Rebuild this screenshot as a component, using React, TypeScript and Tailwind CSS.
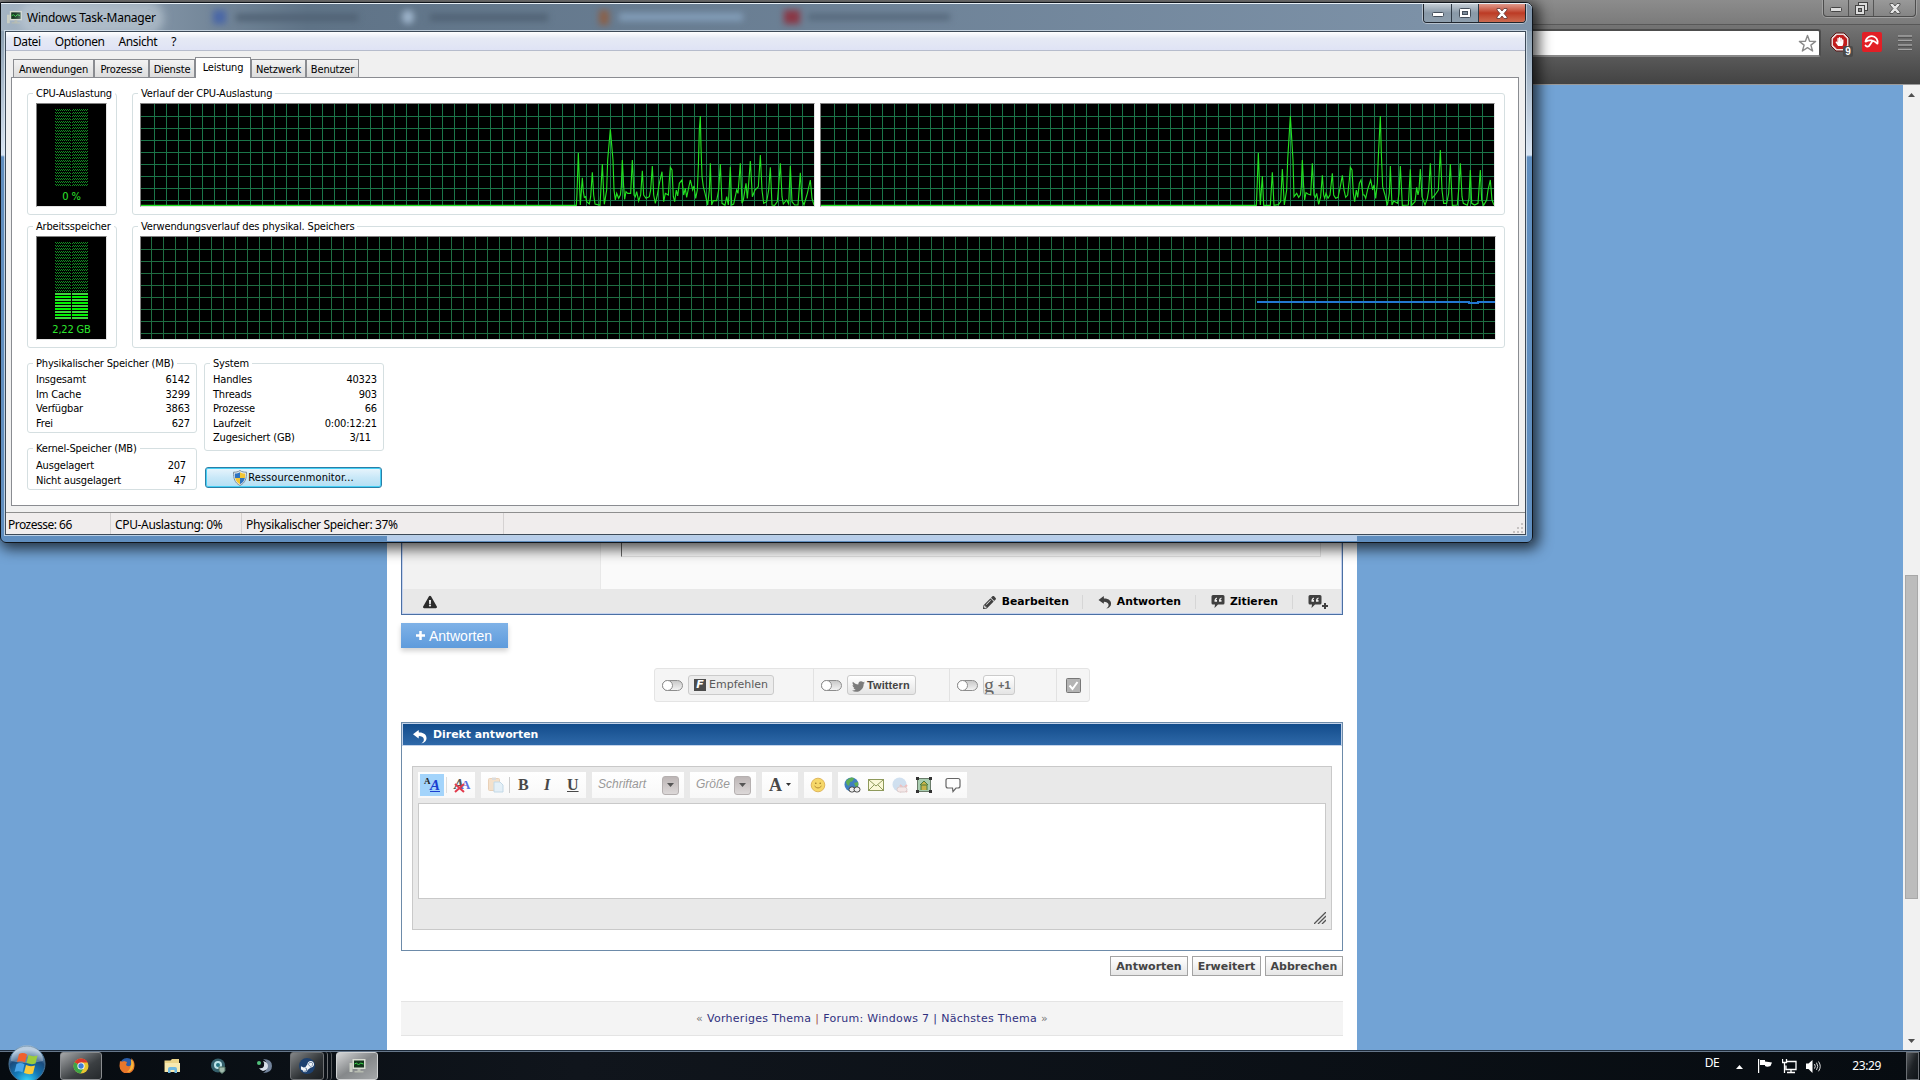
import type { ReactNode } from "react";
import {
	FaExclamationTriangle,
	FaHandPaper,
	FaPencilAlt,
	FaSteamSymbol,
	FaTwitter,
} from "react-icons/fa";

type GroupProps = {
	title: string;
	className: string;
	children: ReactNode;
};

type StatRow = [label: string, value: string];

const tabs = [
	{ label: "Anwendungen", width: "w-[81px]", active: false },
	{ label: "Prozesse", width: "w-[55px]", active: false },
	{ label: "Dienste", width: "w-[46px]", active: false },
	{ label: "Leistung", width: "w-[56px]", active: true },
	{ label: "Netzwerk", width: "w-[55px]", active: false },
	{ label: "Benutzer", width: "w-[53px]", active: false },
];

const physicalMemory: StatRow[] = [
	["Insgesamt", "6142"],
	["Im Cache", "3299"],
	["Verfügbar", "3863"],
	["Frei", "627"],
];

const kernelMemory: StatRow[] = [
	["Ausgelagert", "207"],
	["Nicht ausgelagert", "47"],
];

const systemStats: StatRow[] = [
	["Handles", "40323"],
	["Threads", "903"],
	["Prozesse", "66"],
	["Laufzeit", "0:00:12:21"],
	["Zugesichert (GB)", "3/11"],
];

// usage samples, three units per pixel
const cpuOne =
	"-1197,376 109,376 111,340 115,219 118,300 121,375 127,293 130,335 133,352 137,350 140,365 148,372 152,350 157,277 161,345 165,372 180,376 187,252 191,340 193,373 200,330 203,240 211,148 219,240 222,330 226,360 230,340 236,355 241,345 244,320 247,240 251,320 254,358 258,335 263,340 272,340 277,240 282,345 286,350 290,335 296,363 302,345 307,272 311,345 318,355 328,350 332,330 337,258 341,345 346,370 352,345 358,310 366,275 371,365 376,340 385,345 388,300 391,262 396,270 400,350 404,365 409,330 413,348 418,310 426,300 431,345 436,325 440,352 447,318 451,300 458,330 462,318 467,355 472,330 475,260 478,150 481,108 483,200 486,290 490,320 495,340 503,375 508,330 511,250 515,375 520,362 530,362 536,330 541,252 546,370 555,376 560,350 565,375 571,260 575,375 581,372 590,330 594,340 601,250 606,370 610,360 618,310 622,355 626,310 631,243 637,350 645,330 655,320 661,225 666,330 671,370 680,365 686,330 691,262 696,375 704,376 712,365 716,320 721,250 726,350 730,372 740,360 746,372 751,258 756,365 764,375 774,375 781,278 786,360 792,375 802,340 811,300 816,355 822,375";

const cpuTwo =
	"-1197,376 109,376 111,330 115,219 118,300 121,375 127,288 131,376 151,376 157,277 162,376 175,374 182,365 187,267 191,340 193,375 200,330 203,240 211,108 219,240 222,350 230,340 236,352 241,345 244,320 247,240 251,320 254,360 258,338 264,342 272,345 277,250 282,345 286,352 290,340 296,373 302,350 307,286 311,345 314,355 318,340 324,355 330,345 337,280 341,345 347,355 354,352 360,325 367,286 372,330 377,352 383,345 388,300 391,262 396,270 400,340 404,365 409,330 413,352 418,310 423,300 429,345 433,345 437,355 443,328 452,300 458,330 462,315 467,355 472,310 475,230 481,108 484,220 488,320 495,345 502,376 508,340 511,258 516,375 521,363 533,370 537,340 541,258 547,376 565,375 571,268 575,376 585,365 590,322 594,345 597,330 601,267 606,350 615,375 622,355 626,330 631,250 636,355 645,345 655,330 661,210 666,330 671,370 680,370 686,340 691,252 697,376 712,375 716,330 721,250 726,350 730,370 742,376 747,355 751,270 755,370 764,375 774,370 781,270 785,360 791,376 800,360 804,330 811,300 816,360 822,375";

function Group({ title, className, children }: GroupProps) {
	return (
		<section
			className={`relative rounded-[3px] border border-[#d5dfe1] ${className}`}
		>
			<h2 className="absolute -top-[7px] left-[5px] bg-white px-[3px] leading-[14px] whitespace-nowrap">
				{title}
			</h2>
			{children}
		</section>
	);
}

function Stats({ rows }: { rows: StatRow[] }) {
	return (
		<dl className="pt-[9px] pr-[6px] pl-[8px] leading-[14.6px]">
			{rows.map(([label, value]) => (
				<div key={label} className="flex justify-between whitespace-nowrap">
					<dt>{label}</dt>
					<dd className={label.startsWith("Zuge") ? "pr-[6px]" : ""}>{value}</dd>
				</div>
			))}
		</dl>
	);
}

function Meter({ label, bars }: { label: string; bars: number }) {
	return (
		<div className="flex h-[104px] w-[71px] flex-col items-center border-t border-l border-[#808080] border-r border-b border-r-[#e3e3e3] border-b-[#e3e3e3] bg-black pt-[5px] text-[#2ee62e]">
			<svg width="33" height="78" shapeRendering="crispEdges">
				<defs>
					<pattern id="dither" width="2" height="3" patternUnits="userSpaceOnUse">
						<rect width="1" height="1" fill="#118c22" />
						<rect x="1" y="1" width="1" height="1" fill="#118c22" />
					</pattern>
				</defs>
				<rect width="16" height="77" fill="url(#dither)" />
				<rect x="17" width="16" height="77" fill="url(#dither)" />
				{bars > 0 && (
					<rect y={78 - bars * 3} width="33" height={bars * 3} fill="#000" />
				)}
				{Array.from({ length: bars }, (_, i) => (
					<g key={i} fill={i % 2 ? "#00f500" : "#3cd83c"}>
						<rect y={75 - i * 3} width="16" height="2" />
						<rect x="17" y={75 - i * 3} width="16" height="2" />
					</g>
				))}
			</svg>
			<span className="mt-[3px] leading-[13px]">{label}</span>
		</div>
	);
}

function Grid({
	width,
	height,
	offset,
	color,
}: {
	width: number;
	height: number;
	offset: number;
	color: string;
}) {
	const columns = Math.ceil((width - offset) / 12);
	const rows = Math.floor(height / 12);
	return (
		<g fill={color}>
			{Array.from({ length: columns }, (_, i) => (
				<rect key={i} x={offset + i * 12} width="1" height={height} />
			))}
			{Array.from({ length: rows }, (_, i) => (
				<rect key={i} y={12 + i * 12} width={width} height="1" />
			))}
		</g>
	);
}

function CpuGraph({ points }: { points: string }) {
	return (
		<div className="border border-[#808080] border-r-[#e3e3e3] border-b-[#e3e3e3] bg-black">
			<svg width="673" height="102" className="block">
				<Grid width={673} height={102} offset={13} color="#1b7549" />
				<svg width="673" height="102" viewBox="-1197 72 2019 306">
					<polyline
						points={points}
						fill="none"
						stroke="#22e022"
						strokeWidth="3.4"
					/>
				</svg>
			</svg>
		</div>
	);
}

function MemoryGraph() {
	return (
		<div className="w-fit border border-[#808080] border-r-[#e3e3e3] border-b-[#e3e3e3] bg-black">
			<svg width="1354" height="102" className="block">
				<Grid width={1354} height={102} offset={10} color="#1f6d42" />
				<path
					d="M1116 65H1328V66H1337V65H1354"
					fill="none"
					stroke="#2377d2"
					strokeWidth="2"
				/>
			</svg>
		</div>
	);
}

function MonitorIcon({ className }: { className: string }) {
	return (
		<svg viewBox="0 0 16 16" className={className}>
			<path d="M0 5h3v9H0z" fill="#c9cec4" />
			<rect x="3" y="1" width="13" height="10" fill="#d8dcd2" />
			<rect x="4.5" y="2.5" width="10" height="7" fill="#12351b" />
			<path d="M5 6l2-1 2 2 2-2 3 1" stroke="#3ddc4c" fill="none" />
			<path d="M8 11h3v2h3v1.5H5V13h3z" fill="#b6bbb0" />
		</svg>
	);
}

function ShieldIcon() {
	return (
		<svg width="14" height="16" viewBox="0 0 14 16">
			<path
				d="M7 .5c2 1.500 4 1.700 6.500 1.700 0 6-1 10.500-6.500 13.300C1.500 12.700.5 8.200.5 2.200 3 2.200 5 2 7 .5z"
				fill="#e8eef2"
				stroke="#7b8f9d"
			/>
			<path d="M7 2.200V8H2.100C1.800 6.500 1.800 5 1.800 3.500 4 3.500 5.500 3 7 2.200z" fill="#2f74c0" />
			<path d="M7 2.200V8h4.900c.3-1.500.3-3 .3-4.500C10 3.500 8.500 3 7 2.200z" fill="#f3c634" />
			<path d="M7 8v6.200C4 12.700 2.700 10.500 2.100 8z" fill="#f3c634" />
			<path d="M7 8v6.200c3-1.500 4.300-3.700 4.900-6.200z" fill="#2f74c0" />
		</svg>
	);
}

function WindowButtons() {
	return (
		<div className="flex h-[19px] w-[103px] overflow-hidden rounded-b-[4px] border border-t-0 border-[#20262e] shadow-[0_0_0_1px_#ffffff70]">
			<span className="flex w-[28px] items-center justify-center border-r border-[#2f3a46] bg-linear-to-b from-[#c3ccd4] via-[#8999a8] via-50% to-[#8e9fae]">
				<svg width="12" height="6" className="mt-[3px]">
					<rect x=".5" y=".5" width="11" height="4" rx="1" fill="#fff" stroke="#454f5b" />
				</svg>
			</span>
			<span className="flex w-[27px] items-center justify-center border-r border-[#2f3a46] bg-linear-to-b from-[#c3ccd4] via-[#8999a8] via-50% to-[#8e9fae]">
				<svg width="12" height="10">
					<rect x=".5" y=".5" width="11" height="9" rx="1" fill="#fff" stroke="#454f5b" />
					<rect x="3.5" y="3.5" width="5" height="3" fill="#7c8b99" stroke="#454f5b" />
				</svg>
			</span>
			<span className="flex flex-1 items-center justify-center bg-linear-to-b from-[#e0998b] via-[#bc3a24] via-50% to-[#cc6a50]">
				<svg width="12" height="11">
					<path
						d="M1 .5h3L6 3l2-2.500h3v1.500L8 5.500l3 3.500v1.500H8L6 8l-2 2.500H1V9l3-3.500L1 2z"
						fill="#fff"
						stroke="#5b3334"
						strokeWidth=".8"
					/>
				</svg>
			</span>
		</div>
	);
}

function TaskManager() {
	return (
		<main className="absolute top-[2px] left-0 flex h-[541px] w-[1533px] flex-col rounded-tr-[7px] rounded-b-[6px] border border-[#10151b] bg-linear-to-b from-[#8ea1b3] from-[30px] via-[#d9e5f3] via-[152px] to-[#608ebf] to-[154px] pr-[6px] pl-[4px] font-['DejaVu_Sans_Condensed','DejaVu_Sans',sans-serif] text-[11px] tracking-[-0.17px] text-black shadow-[3px_3px_14px_3px_#000000b0]">
			<header className="-mr-[6px] -ml-[4px] flex h-[28px] shrink-0 justify-between overflow-hidden rounded-tr-[6px] border-t border-[#e6eef5] bg-linear-to-r from-[#a4b4c3] via-[#5f7387] via-20% to-[#7f94aa]">
				<div className="flex h-[26px] items-center">
					<MonitorIcon className="ml-[6px] h-[15px] w-[15px]" />
					<h1 className="mt-px ml-[5px] rounded-full bg-[#c3ced899] font-['Noto_Sans',sans-serif] text-[12px] tracking-[-0.25px] shadow-[0_0_8px_8px_#c3ced899]">
						Windows Task-Manager
					</h1>
					<div className="ml-[57px] flex items-center blur-[3px]">
						<i className="h-[14px] w-[13px] bg-[#4a67a6]" />
						<i className="ml-[10px] h-[7px] w-[122px] bg-[#506274]" />
						<i className="ml-[44px] h-[14px] w-[12px] rounded-full bg-[#9db3ca]" />
						<i className="ml-[16px] h-[7px] w-[118px] bg-[#506274]" />
						<i className="ml-[51px] h-[15px] w-[10px] bg-[#8a6049]" />
						<i className="ml-[10px] h-[8px] w-[124px] bg-[#829db8]" />
						<i className="ml-[41px] h-[14px] w-[16px] bg-[#8a3745]" />
						<i className="ml-[8px] h-[6px] w-[142px] bg-[#55677a]" />
					</div>
				</div>
				<div className="mr-[6px]">
					<WindowButtons />
				</div>
			</header>
			<div className="flex h-[504px] flex-col border border-[#3d4a58] bg-[#f0f0f0] shadow-[0_0_0_1px_#e4edf6b0]">
				<nav className="flex h-[19px] shrink-0 items-center gap-[14px] border-b border-[#b6bccc] bg-linear-to-b from-white via-[#e6eaf5] via-35% to-[#dfe3f5] pt-[2px] pl-[7px] font-['Noto_Sans',sans-serif] text-[12px] tracking-[-0.4px]">
					<span>Datei</span>
					<span>Optionen</span>
					<span>Ansicht</span>
					<span>?</span>
				</nav>
				<ul className="z-10 mt-[6px] flex h-[20px] shrink-0 items-end pl-[7px]">
					{tabs.map((tab) => (
						<li
							key={tab.label}
							className={`flex shrink-0 justify-center border border-b-0 border-[#8a8c91] ${tab.width} ${
								tab.active
									? "-mb-px h-[21px] bg-white pt-[2px]"
									: "h-[18px] bg-linear-to-b from-[#f3f3f3] to-[#dddddd] pt-[2px]"
							}`}
						>
							{tab.label}
						</li>
					))}
				</ul>
				<div className="mx-[5px] h-[429px] w-[1508px] shrink-0 border border-[#8a8c91] bg-white pt-[15px] pl-[15px]">
					<div className="flex gap-[15px]">
						<Group title="CPU-Auslastung" className="h-[122px] w-[90px] pt-[9px] pl-[8px]">
							<Meter label="0 %" bars={0} />
						</Group>
						<Group
							title="Verlauf der CPU-Auslastung"
							className="flex h-[122px] w-[1373px] items-start gap-[5px] pt-[9px] pl-[7px]"
						>
							<CpuGraph points={cpuOne} />
							<CpuGraph points={cpuTwo} />
						</Group>
					</div>
					<div className="mt-[11px] flex gap-[15px]">
						<Group title="Arbeitsspeicher" className="h-[122px] w-[90px] pt-[9px] pl-[8px]">
							<Meter label="2,22 GB" bars={9} />
						</Group>
						<Group
							title="Verwendungsverlauf des physikal. Speichers"
							className="h-[122px] w-[1373px] pt-[9px] pl-[7px]"
						>
							<MemoryGraph />
						</Group>
					</div>
					<div className="mt-[15px] flex gap-[7px]">
						<div className="flex flex-col gap-[15px]">
							<Group title="Physikalischer Speicher (MB)" className="h-[70px] w-[170px]">
								<Stats rows={physicalMemory} />
							</Group>
							<Group title="Kernel-Speicher (MB)" className="h-[42px] w-[170px]">
								<div className="pt-px pr-[4px]">
									<Stats rows={kernelMemory} />
								</div>
							</Group>
						</div>
						<div>
							<Group title="System" className="h-[88px] w-[180px]">
								<Stats rows={systemStats} />
							</Group>
							<button className="mt-[16px] ml-px flex h-[21px] w-[177px] items-center justify-center rounded-[3px] border border-[#2b7ea6] bg-linear-to-b from-[#e9f5fc] via-[#c9e8f8] via-50% to-[#b3dff4] tracking-[0.08px] shadow-[inset_0_0_0_1px_#45d0f6]">
								<ShieldIcon />
								<span className="mt-px ml-px">Ressourcenmonitor...</span>
							</button>
						</div>
					</div>
				</div>
				<footer className="mt-[6px] flex flex-1 items-center border-t border-[#8e8e8e] bg-[#f0eded] font-['Noto_Sans',sans-serif] text-[12px] tracking-[-0.35px]">
					<span className="flex h-full w-[105px] items-center border-r border-[#d5d2d2] pt-[2px] pl-[2px] tracking-[-0.5px]">
						Prozesse: 66
					</span>
					<span className="flex h-full w-[131px] items-center border-r border-[#d5d2d2] pt-[2px] pl-[4px]">
						CPU-Auslastung: 0%
					</span>
					<span className="flex h-full w-[262px] items-center border-r border-[#d5d2d2] pt-[2px] pl-[4px]">
						Physikalischer Speicher: 37%
					</span>
					<svg width="12" height="12" className="mt-auto ml-auto" fill="#c6c2c2">
						<path d="M8 1h2v2H8zM8 5h2v2H8zM8 9h2v2H8zM4 5h2v2H4zM4 9h2v2H4zM0 9h2v2H0z" />
					</svg>
				</footer>
			</div>
			<div className="mt-px ml-[382px] h-[5px] w-[970px] bg-[#b7cde9]" />
		</main>
	);
}

function BrowserChrome() {
	return (
		<header className="h-[85px] border-b border-[#9a9a9a]">
			<div className="flex h-[25px] justify-end border-b border-[#585858] bg-linear-to-b from-[#8c8c8c] to-[#7b7b7b] pr-[4px]">
				<div className="flex h-[17px] w-[93px] rounded-b-[4px] border border-t-0 border-[#4c4c4c] bg-linear-to-b from-[#999] to-[#858585] shadow-[0_0_0_1px_#a2a2a2]">
					<span className="flex w-[25px] items-center justify-center border-r border-[#555]">
						<svg width="12" height="6" className="mt-1">
							<rect x=".5" y=".5" width="11" height="4" rx="1" fill="#ddd" stroke="#444" />
						</svg>
					</span>
					<span className="flex w-[25px] items-center justify-center border-r border-[#555]">
						<svg width="13" height="13" fill="#ddd" stroke="#444">
							<rect x="3.5" y=".5" width="9" height="8" />
							<rect x=".5" y="3.5" width="9" height="9" />
							<rect x="3.5" y="6.5" width="3" height="3" fill="#888" />
						</svg>
					</span>
					<span className="flex flex-1 items-center justify-center">
						<svg width="12" height="11">
							<path
								d="M1 .5h3L6 3l2-2.500h3v1.500L8 5.500l3 3.500v1.500H8L6 8l-2 2.500H1V9l3-3.500L1 2z"
								fill="#e4e4e4"
								stroke="#444"
								strokeWidth=".8"
							/>
						</svg>
					</span>
				</div>
			</div>
			<div className="flex h-[59px] items-start justify-end bg-linear-to-b from-[#747474] to-[#434343] pt-[4px]">
				<div className="flex h-[28px] w-[1000px] items-center justify-end rounded-[3px] border-2 border-[#4d4d4d] border-b-[#8a8a8a] bg-white pr-[2px]">
					<svg width="19" height="19" viewBox="0 0 19 19">
						<path
							d="M9.500 1.500l2.100 5.700 6 .2-4.700 3.700 1.700 5.900-5.100-3.400L4.400 17l1.700-5.900L1.400 7.400l6-.2z"
							fill="#fff"
							stroke="#8a8a8a"
							strokeWidth="1.4"
							strokeLinejoin="round"
						/>
					</svg>
				</div>
				<div className="relative mt-[3px] ml-[9px] h-[24px] w-[24px]">
					<svg width="20" height="20" viewBox="0 0 20 20">
						<path d="M6 1h8l5 5v8l-5 5H6l-5-5V6z" fill="#e8dada" stroke="#5d1414" />
						<path d="M6.800 3h6.400L17 6.800v6.400L13.200 17H6.800L3 13.200V6.800z" fill="#c11d1d" />
						<FaHandPaper x="5" y="5" size="9" fill="#fff" />
					</svg>
					<span className="absolute top-[14px] left-[13px] h-[11px] w-[10px] rounded-[2px] bg-[#4a4a4a] text-center font-['Liberation_Sans',sans-serif] text-[10px] leading-[11px] font-bold text-white">
						9
					</span>
				</div>
				<svg width="20" height="20" viewBox="0 0 20 20" className="mt-[3px] ml-[8px]">
					<rect width="20" height="20" rx="2" fill="#e21f26" />
					<path
						d="M3.500 9.500C5 4 11 2.500 14.500 6.500c1 1.500 1.300 3 1 5M4 9.500c3-2 8-1.500 11 2M10.500 9L7 14q-2 1.500-3.500-.5"
						fill="none"
						stroke="#fff"
						strokeWidth="1.800"
						strokeLinecap="round"
					/>
				</svg>
				<svg width="14" height="16" className="mt-[6px] mr-[8px] ml-[16px]">
					<path d="M0 2h14M0 6.500h14M0 11h14M0 15.500h14" stroke="#3e3e3e" />
					<path d="M0 1h14M0 5.500h14M0 10h14M0 14.500h14" stroke="#a4a4a4" strokeWidth="1.500" />
				</svg>
			</div>
		</header>
	);
}

function ReplyArrow({ className, fill }: { className: string; fill: string }) {
	return (
		<svg viewBox="0 0 15 15" className={className} fill={fill}>
			<path d="M0 4.500L6 0l.3 2.800C11 2.500 14.500 5 14.500 8.800c0 2.700-2 5-5.500 5.700 2.300-1.500 3-3.200 2.500-5C11 7.500 9 6.500 6.300 6.500L6 9z" />
		</svg>
	);
}

function QuoteIcon() {
	return (
		<svg width="14" height="14" viewBox="0 0 14 14">
			<path d="M2 0h10q1.500 0 1.500 1.500V8q0 1.500-1.500 1.500H7L3.500 13 4 9.500H2Q.5 9.500.5 8V1.500Q.5 0 2 0z" fill="#404040" />
			<path
				d="M6 2.500Q3.500 3 3.500 5v1.800H6V5H5q0-1 1-1.300zM10.500 2.500Q8 3 8 5v1.800h2.500V5h-1q0-1 1-1.300z"
				fill="#eee"
			/>
		</svg>
	);
}

function Post() {
	return (
		<article className="flex h-[91px] flex-col border border-t-0 border-[#4b70a4] p-px pt-0 shadow-[inset_-1px_-1px_0_#c6d3ee,inset_1px_0_0_#c6d3ee]">
			<div className="flex h-[65px]">
				<div className="w-[198px] border-r border-[#e8e8e8] bg-[#f2f2f2]" />
				<div className="flex-1 bg-[#fafafa] pr-[20px] pl-[20px]">
					<div className="h-[33px] border-r border-b border-l border-[#e2e2e2] border-l-[#666]" />
				</div>
			</div>
			<footer className="flex h-[24px] items-center bg-[#e8e8e8] text-[10.8px] font-bold text-black">
				<FaExclamationTriangle size="14" className="mt-px ml-[20px] text-[#2c2c2c]" />
				<div className="mt-[2px] ml-auto flex h-[14px] items-center border-r border-[#d6d6d6] pr-[13px]">
					<FaPencilAlt size="13" className="mr-[6px] text-[#404040]" />
					Bearbeiten
				</div>
				<div className="mt-[2px] flex h-[14px] items-center border-r border-[#d6d6d6] pr-[14px] pl-[15px]">
					<ReplyArrow className="mr-[5px] h-[13px] w-[14px]" fill="#404040" />
					Antworten
				</div>
				<div className="mt-[2px] flex h-[14px] items-center border-r border-[#d6d6d6] pr-[14px] pl-[15px]">
					<span className="mr-[5px]">
						<QuoteIcon />
					</span>
					Zitieren
				</div>
				<div className="mt-px flex items-center pr-[13px] pl-[15px]">
					<QuoteIcon />
					<svg width="6" height="6" className="mt-[9px]">
						<path d="M0 3h6M3 0v6" stroke="#404040" strokeWidth="2" />
					</svg>
				</div>
			</footer>
		</article>
	);
}

function Toggle() {
	return (
		<span className="flex h-[11px] w-[21px] shrink-0 rounded-full border border-[#8d8d8d] bg-linear-to-b from-[#c9c9c9] to-[#f4f4f4]">
			<span className="-mt-px -ml-px h-[11px] w-[11px] rounded-full border border-[#8d8d8d] bg-white" />
		</span>
	);
}

function ShareBar() {
	return (
		<div className="ml-[253px] flex h-[34px] w-[436px] rounded-[3px] border border-[#e4e4e4] bg-[#f5f5f5] text-[#666]">
			<div className="flex w-[159px] items-center border-r border-[#e2e2e2] pl-[7px]">
				<Toggle />
				<span className="ml-[5px] flex h-[20px] w-[86px] items-center rounded-[3px] border border-[#cbcbcb] bg-[#ececec] pl-[5px] text-[11px] text-[#5a5a5a]">
					<span className="mr-[3px] h-[12px] w-[12px] bg-[#4c4c4c] text-center text-[11px] leading-[12px] font-bold text-white italic">
						F
					</span>
					Empfehlen
				</span>
			</div>
			<div className="flex w-[136px] items-center border-r border-[#e2e2e2] pl-[7px]">
				<Toggle />
				<span className="ml-[5px] flex h-[20px] w-[69px] items-center rounded-[3px] border border-[#cbcbcb] bg-linear-to-b from-white to-[#e4e4e4] pl-[4px] font-['Liberation_Sans',sans-serif] text-[11px] font-bold tracking-[0.1px] text-[#444]">
					<FaTwitter size="13" className="mt-[2px] mr-[2px] text-[#7b7b7b]" />
					Twittern
				</span>
			</div>
			<div className="flex w-[107px] items-center border-r border-[#e2e2e2] pl-[7px]">
				<Toggle />
				<span className="ml-[5px] flex h-[20px] w-[32px] items-center overflow-hidden rounded-[3px] border border-[#cbcbcb] bg-linear-to-b from-white to-[#e4e4e4] font-['Liberation_Sans',sans-serif] text-[11px] font-bold text-[#666]">
					<span className="mr-[5px] w-[9px] font-['Liberation_Serif',serif] text-[20px] leading-[18px] font-normal">
						g
					</span>
					+1
				</span>
			</div>
			<div className="flex flex-1 items-center justify-center">
				<svg width="15" height="15">
					<rect x=".5" y=".5" width="14" height="14" rx="1" fill="#b4b4b4" stroke="#777" />
					<path d="M3.500 7.500l3 3.500 5-7" fill="none" stroke="#fff" strokeWidth="2" />
				</svg>
			</div>
		</div>
	);
}

const toolGroup =
	"flex h-[26px] shrink-0 items-center bg-linear-to-b from-white to-[#f8f8f8]";

function DropdownArrow() {
	return (
		<span className="flex h-[19px] w-[17px] items-center justify-center rounded-[3px] border border-[#b5b0b0] bg-linear-to-b from-[#bdb6b6] to-[#dcd8d8]">
			<svg width="7" height="4">
				<path d="M0 0h7L3.500 4z" fill="#555" />
			</svg>
		</span>
	);
}

function Toolbar() {
	return (
		<div className="flex gap-[6px] font-['Liberation_Sans',sans-serif] text-[12px] text-[#999]">
			<div className={`${toolGroup} w-[57px] pl-[2px]`}>
				<span className="relative flex h-[22px] w-[24px] items-center justify-end bg-[#a3d4fb] pr-[4px] font-['Liberation_Serif',serif] font-bold">
					<b className="absolute top-[3px] left-[4px] text-[9px] leading-[9px] text-[#222]">A</b>
					<b className="text-[15px] leading-[14px] text-[#1b3fd0] italic underline">A</b>
				</span>
				<i className="ml-[2px] h-[16px] w-px bg-[#ddd]" />
				<span className="relative ml-[7px] flex font-['Liberation_Serif',serif] font-bold">
					<b className="text-[15px] leading-[16px] text-[#555] italic">A</b>
					<b className="-ml-[3px] text-[13px] leading-[18px] text-[#5b6fe0]">A</b>
					<svg width="11" height="10" className="absolute top-[7px] left-0">
						<path d="M1 1l9 8M10 1L1 9" stroke="#e23a4c" strokeWidth="2" />
					</svg>
				</span>
			</div>
			<div className={`${toolGroup} w-[105px] pl-[7px] font-['Liberation_Serif',serif] text-[16px] font-bold text-[#484848]`}>
				<svg width="16" height="16" opacity=".5">
					<rect x=".5" y="1.5" width="11" height="12" rx="1" fill="#edc79c" stroke="#d8a877" />
					<rect x="4" y=".5" width="4" height="2.5" fill="#bbb" />
					<path d="M6 5h6l3 3v7H6z" fill="#cfe6f5" stroke="#8bb8d4" />
				</svg>
				<i className="ml-[5px] h-[16px] w-px bg-[#ccc]" />
				<span className="ml-[8px] w-[11px]">B</span>
				<span className="ml-[15px] w-[8px] italic">I</span>
				<span className="ml-[15px] underline">U</span>
			</div>
			<div className={`${toolGroup} w-[92px] justify-between pr-[5px] pl-[6px] italic`}>
				<span className="-mt-[2px]">Schriftart</span>
				<DropdownArrow />
			</div>
			<div className={`${toolGroup} w-[66px] justify-between pr-[5px] pl-[6px] italic`}>
				<span className="-mt-[2px]">Größe</span>
				<DropdownArrow />
			</div>
			<div className={`${toolGroup} w-[36px] pl-[7px]`}>
				<b className="font-['Liberation_Serif',serif] text-[18px] text-[#484848]">A</b>
				<svg width="5" height="4" className="ml-[4px]">
					<path d="M0 0h5L2.500 3z" fill="#333" />
				</svg>
			</div>
			<div className={`${toolGroup} w-[28px] justify-center`}>
				<svg width="16" height="16">
					<circle cx="8" cy="8" r="6.800" fill="#f6d869" stroke="#e0b65c" />
					<circle cx="5.800" cy="6.300" r=".8" fill="#9a7426" />
					<circle cx="10.200" cy="6.300" r=".8" fill="#9a7426" />
					<path d="M4.500 9q3.500 4 7 0" stroke="#b58b35" fill="none" />
				</svg>
			</div>
			<div className={`${toolGroup} w-[129px] pl-[6px]`}>
				<svg width="17" height="17">
					<circle cx="7.500" cy="7.500" r="7" fill="#3f7fc0" />
					<path d="M2 4q4-5 8-3-1 4-4 4l-1 4q-3-1-3-5zM10 6l4-1q1 4-2 6z" fill="#5fae55" />
					<rect x="5" y="10" width="6" height="5" rx="2.5" fill="#eee" stroke="#444" />
					<rect x="10" y="10" width="6" height="5" rx="2.5" fill="#eee" stroke="#444" />
				</svg>
				<svg width="16" height="12" className="ml-[7px]">
					<rect x=".5" y=".5" width="15" height="11" fill="#fbf8d8" stroke="#8f9a5c" />
					<path d="M1 1l7 6 7-6M1 11l5-5M15 11l-5-5" fill="none" stroke="#8f9a5c" />
				</svg>
				<svg width="16" height="16" className="ml-[8px]" opacity=".4">
					<circle cx="7.500" cy="7.500" r="7" fill="#8fb7de" />
					<path d="M8 8l7 7M15 8l-7 7" stroke="#d66" strokeWidth="2" />
					<rect x="5" y="10" width="10" height="5" rx="2.5" fill="#ecc" stroke="#a88" />
				</svg>
				<svg width="16" height="16" className="ml-[8px]">
					<rect x="1.5" y="1.5" width="13" height="13" fill="#a9cdb0" stroke="#6a7c6a" />
					<path d="M5 13V8h6v5M4 8l4-4 4 4" fill="#c7b34a" stroke="#4c7c3c" />
					<path d="M0 0h3v3H0zM13 0h3v3h-3zM0 13h3v3H0zM13 13h3v3h-3z" fill="#333" />
				</svg>
				<svg width="16" height="16" className="ml-[13px]">
					<path
						d="M3 1.500h10q2 0 2 2V9q0 2-2 2h-2l-3 3.500L7.500 11H3q-2 0-2-2V3.500q0-2 2-2z"
						fill="#fdfdfd"
						stroke="#666"
						strokeWidth="1.2"
					/>
				</svg>
			</div>
		</div>
	);
}

function QuickReply() {
	return (
		<section className="h-[229px] border border-[#6d8ba9]">
			<h2 className="flex h-[23px] items-center border border-[#c3d3ea] bg-linear-to-b from-[#124c8b] to-[#2e69a9] pt-[2px] pl-[10px] text-[10.9px] font-bold text-white">
				<ReplyArrow className="mt-[2px] mr-[6px] h-[14px] w-[14px]" fill="#fff" />
				Direkt antworten
			</h2>
			<div className="mx-[10px] mt-[20px] h-[164px] border border-[#c9c9c9] bg-[#e9e9e9] px-[5px] pt-[5px]">
				<Toolbar />
				<div className="mt-[5px] h-[96px] border border-[#c9c9c9] bg-white" />
				<svg width="12" height="12" className="mt-[13px] ml-auto block">
					<path d="M0 12L12 0M4 12L12 4M8 12L12 8" stroke="#555" strokeWidth="1.3" />
				</svg>
			</div>
		</section>
	);
}

const formButton =
	"h-[20px] border border-[#a3a3a3] bg-linear-to-b from-white to-[#e6e6e6] text-center leading-[20px]";

function ForumPage() {
	return (
		<div className="ml-[387px] w-[970px] bg-white px-[14px] pt-[439px] font-['DejaVu_Sans',sans-serif]">
			<Post />
			<div className="mt-[8px] flex h-[25px] w-[107px] items-center bg-linear-to-b from-[#7fb2e7] to-[#5e9bdc] pt-px pl-[15px] font-['Liberation_Sans',sans-serif] text-[14px] text-white shadow-[0_3px_5px_#0000002e]">
				<svg width="9" height="9" className="mr-[4px] -mt-[2px]">
					<path d="M0 4.500h9M4.500 0v9" stroke="#fff" strokeWidth="2.5" />
				</svg>
				Antworten
			</div>
			<div className="h-[20px]" />
			<ShareBar />
			<div className="h-[20px]" />
			<QuickReply />
			<div className="mt-[5px] flex justify-end gap-[4px] text-[11px] font-bold text-[#444]">
				<span className={`${formButton} w-[78px]`}>Antworten</span>
				<span className={`${formButton} w-[69px]`}>Erweitert</span>
				<span className={`${formButton} w-[78px]`}>Abbrechen</span>
			</div>
			<nav className="mt-[25px] flex h-[35px] items-center justify-center gap-[4px] border-y border-[#e4e4e4] bg-[#f4f4f4] pt-[2px] text-[11px] tracking-[0.27px] text-[#30307e]">
				<span className="text-[#777]">«</span>
				<span>Vorheriges Thema</span>
				<span className="text-[#a0524c]">|</span>
				<span>Forum: Windows 7</span>
				<span>|</span>
				<span>Nächstes Thema</span>
				<span className="text-[#777]">»</span>
			</nav>
		</div>
	);
}

function Scrollbar() {
	return (
		<div className="flex w-[17px] flex-col items-center bg-[#f1f1f1] pt-[8px] pb-[7px]">
			<svg width="7" height="4">
				<path d="M0 4h7L3.500 0z" fill="#505050" />
			</svg>
			<div className="mt-[478px] h-[324px] w-[13px] border border-[#a8a8a8] bg-[#bcbcbc]" />
			<svg width="7" height="4" className="mt-auto">
				<path d="M0 0h7L3.500 4z" fill="#505050" />
			</svg>
		</div>
	);
}

function StartOrb() {
	return (
		<svg width="38" height="38" viewBox="0 0 38 38" className="-mt-[6px] ml-[8px] shrink-0">
			<defs>
				<radialGradient id="orb" cx=".5" cy="1" r=".9">
					<stop offset="0" stopColor="#38dcff" />
					<stop offset=".4" stopColor="#1479b8" />
					<stop offset=".75" stopColor="#1b4b7c" />
					<stop offset="1" stopColor="#9cb9d4" />
				</radialGradient>
			</defs>
			<circle cx="19" cy="19" r="18" fill="url(#orb)" stroke="#4b7597" />
			<path d="M3 16a16 16 0 0 1 32 0q-16 4-32 0z" fill="#fff" opacity=".3" />
			<path d="M11 9q4-2 8 .5l-2 8q-4-2-8-.5z" fill="#f0602c" />
			<path d="M20.500 10q4 2 9 .5l-2 8q-4 1.500-9-.5z" fill="#9ccc3d" />
			<path d="M8.500 19q4-2 8 .3l-2 8q-4-2-8-.3z" fill="#4aa5e8" />
			<path d="M18 20q4 2 9 .5l-2 8q-4 1.500-9-.5z" fill="#fbcb3a" />
		</svg>
	);
}

function Taskbar() {
	return (
		<footer className="absolute bottom-0 left-0 flex h-[30px] w-full border-t border-[#1c2a3a] bg-linear-to-r from-[#060b10] via-[#10151c] via-30% to-[#070c11] text-white shadow-[inset_0_1px_0_#66778a]">
			<StartOrb />
			<div className="mt-px ml-[14px] flex h-[28px] w-[42px] items-center justify-center rounded-[3px] border border-[#8a8d90] bg-linear-to-br from-[#a7a9ab] via-[#3b3f42] via-60% to-[#25292c]">
				<svg width="16" height="16" viewBox="0 0 16 16">
					<circle cx="8" cy="8" r="7.500" fill="#e8c62f" />
					<path d="M8 8L1.500 4.200A7.500 7.500 0 0 1 14.700 4.500H8z" fill="#d9382c" />
					<path d="M8 8L1.500 4.200A7.500 7.500 0 0 0 7.500 15.500L11 9.500z" fill="#3da548" />
					<circle cx="8" cy="8" r="3.600" fill="#fff" />
					<circle cx="8" cy="8" r="2.700" fill="#3f7fd6" />
				</svg>
			</div>
			<svg width="16" height="16" viewBox="0 0 16 16" className="mt-[6px] ml-[17px]">
				<circle cx="8" cy="8" r="7" fill="#2a5da8" />
				<path d="M1 4q2 1 4 0l3 1-1 3q3 3 6-1 1-3-1-6 4 3 3.500 8A7.500 7.500 0 0 1 .5 9z" fill="#e8762a" />
				<path d="M12 2q4 4 2 9-2 4-6 4 5-3 4-13z" fill="#f6b63a" />
			</svg>
			<svg width="17" height="16" viewBox="0 0 17 16" className="mt-[7px] ml-[29px]">
				<path d="M.5 2.500h6l1.500-1.500h7v13H.5z" fill="#ecd58a" />
				<path d="M1 5h15v9H1z" fill="#f7e9b0" />
				<path d="M4 15v-4q0-2 2-2h5q2 0 2 2v4h-2.500v-3h-4v3z" fill="#6fb9e2" />
			</svg>
			<svg width="17" height="16" viewBox="0 0 17 16" className="mt-[7px] ml-[29px]">
				<circle cx="8" cy="7.500" r="7" fill="#35606c" />
				<circle cx="8" cy="7" r="4" fill="#bfe5ea" />
				<circle cx="8" cy="7" r="2" fill="#277684" />
				<path d="M9 9h6v4l-3 2.500L9 13z" fill="#9fb9ab" stroke="#4c6d60" />
			</svg>
			<svg width="17" height="16" viewBox="0 0 17 16" className="mt-[7px] ml-[29px]">
				<circle cx="3" cy="5" r="2" fill="#51c17b" />
				<path d="M7 1q9 0 9 7t-9 7q4-2 4-7T7 1z" fill="#72839b" />
				<path d="M7 3q5 1 5 5t-5 5q-3-1-4-3 4 1 5-2T7 3z" fill="#d8dfea" />
			</svg>
			<div className="mt-px ml-[17px] flex h-[28px] w-[34px] items-center justify-center rounded-[3px] border border-[#6e7174] bg-linear-to-br from-[#85888a] via-[#2e3235] via-60% to-[#1b1f22]">
				<span className="flex h-[16px] w-[16px] items-center justify-center rounded-full bg-[#1d4170]">
					<FaSteamSymbol size="15" color="#f0f4f8" />
				</span>
			</div>
			<i className="mt-px h-[28px] w-[4px] rounded-r-[3px] border-r border-[#6e7174]" />
			<i className="mt-px h-[28px] w-[4px] rounded-r-[3px] border-r border-[#55585b]" />
			<div className="mt-px ml-[4px] flex h-[28px] w-[42px] items-center justify-center rounded-[3px] border border-[#d0d2d3] bg-linear-to-br from-[#d5d6d7] via-[#85888a] to-[#a5a8aa]">
				<MonitorIcon className="h-[16px] w-[17px]" />
			</div>
			<div className="ml-auto flex font-['Noto_Sans',sans-serif] text-[12px] tracking-[-0.4px]">
				<span className="mt-[3px] leading-[18px]">DE</span>
				<svg width="7" height="4" className="mt-[14px] ml-[17px]">
					<path d="M0 4h7L3.500 0z" fill="#fff" />
				</svg>
				<svg width="15" height="15" viewBox="0 0 15 15" className="mt-[8px] ml-[15px]" fill="#fff">
					<path d="M0 0h1.200v14H0zM2 1h5v1.500q4 .5 7 1L12.500 7Q9 8.500 7 7V6H2z" />
				</svg>
				<svg width="15" height="15" viewBox="0 0 15 15" className="mt-[8px] ml-[9px]">
					<path d="M5 2.500h9v8H4v-4M9 10.500V13M5 13.500h8M.5 0v3.500h4V0M2.500 3v11" fill="none" stroke="#fff" strokeWidth="1.3" />
				</svg>
				<svg width="15" height="15" viewBox="0 0 15 15" className="mt-[8px] ml-[9px]">
					<path d="M0 4.500h2.500L6.500 1v13L2.500 10H0z" fill="#fff" />
					<path d="M8.500 5q1.500 2.300 0 4.600M10.500 3.700q2.500 3.600 0 7.200M12.500 2.500q3.500 4.900 0 9.800" fill="none" stroke="#ddd" />
				</svg>
				<time className="mt-[6px] ml-[31px] leading-[18px]">23:29</time>
				<span className="mt-px mr-px ml-[25px] w-[13px] border border-[#6a6e73] bg-linear-to-br from-[#55595d] via-[#1e2226] to-[#101418]" />
			</div>
		</footer>
	);
}

export default function App() {
	return (
		<div className="relative h-[1080px] w-[1920px] overflow-hidden bg-[#72a3d5]">
			<div className="flex h-[1050px] flex-col">
				<BrowserChrome />
				<div className="flex min-h-0 flex-1 justify-between">
					<ForumPage />
					<Scrollbar />
				</div>
			</div>
			<TaskManager />
			<Taskbar />
		</div>
	);
}
